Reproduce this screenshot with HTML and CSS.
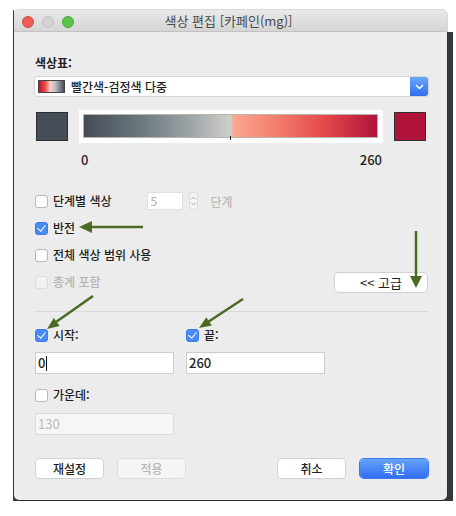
FILE: index.html
```html
<!DOCTYPE html>
<html lang="ko">
  <head>
    <meta charset="UTF-8" />
    <meta name="viewport" content="width=device-width, initial-scale=1.0" />
    <title>색상 편집</title>
    <link rel="stylesheet" href="styles.css">
  </head>
  <body>
    <div class="backdrop">
      <div class="window">
        <div class="titlebar">
          <div class="lights">
            <span class="light red"></span>
            <span class="light gray"></span>
            <span class="light green"></span>
          </div>
          <div class="title">색상 편집 [카페인(mg)]</div>
        </div>

        <div class="content">
          <div class="section-label">색상표:</div>

          <div class="dropdown">
            <span class="mini-swatch"></span>
            <span class="dropdown-text">빨간색-검정색 다중</span>
            <span class="dropdown-btn">
              <svg width="9" height="6" viewBox="0 0 9 6"><path d="M1 1 L4.5 4.5 L8 1" fill="none" stroke="#fff" stroke-width="1.5"/></svg>
            </span>
          </div>

          <div class="color-row">
            <div class="swatch swatch-start"></div>
            <div class="ramp">
              <div class="ramp-fill"></div>
              <span class="ramp-tick"></span>
            </div>
            <div class="swatch swatch-end"></div>
          </div>

          <div class="range-labels">
            <span>0</span>
            <span>260</span>
          </div>

          <div class="options">
            <div class="opt-row">
              <label class="check"><span class="box"></span>단계별 색상</label>
              <span class="spin">5</span>
              <span class="stepper">
                <svg width="8" height="14" viewBox="0 0 8 14"><path d="M1.5 5 L4 2.5 L6.5 5 M1.5 9 L4 11.5 L6.5 9" fill="none" stroke="#9a9a9a" stroke-width="1"/></svg>
              </span>
              <span class="muted">단계</span>
            </div>
            <div class="opt-row">
              <label class="check"><span class="box checked"></span>반전</label>
            </div>
            <div class="opt-row">
              <label class="check"><span class="box"></span>전체 색상 범위 사용</label>
            </div>
            <div class="opt-row between">
              <label class="check disabled"><span class="box"></span>총계 포함</label>
              <button class="btn advanced">&lt;&lt; 고급</button>
            </div>
          </div>

          <div class="separator"></div>

          <div class="range-grid">
            <label class="check"><span class="box checked"></span>시작:</label>
            <label class="check"><span class="box checked"></span>끝:</label>
            <div class="field">0<span class="caret"></span></div>
            <div class="field">260</div>
            <label class="check middle"><span class="box"></span>가운데:</label>
            <div></div>
            <div class="field disabled">130</div>
          </div>

          <div class="footer">
            <div class="footer-left">
              <button class="btn">재설정</button>
              <button class="btn disabled">적용</button>
            </div>
            <div class="footer-right">
              <button class="btn">취소</button>
              <button class="btn primary">확인</button>
            </div>
          </div>
        </div>

        <!-- annotation arrows drawn over the dialog -->
        <svg class="arrows" width="433" height="490" viewBox="0 0 433 490">
          <g stroke="#4b6a22" stroke-width="2.5" fill="#4b6a22">
            <line x1="129" y1="217" x2="76" y2="217"/>
            <polygon points="65,217 78,211 78,223" stroke="none"/>
            <line x1="402" y1="221" x2="402" y2="268"/>
            <polygon points="402,278 396,266 408,266" stroke="none"/>
            <line x1="79" y1="286" x2="42" y2="312"/>
            <polygon points="33,319 45.7,316.1 39.8,307.9" stroke="none"/>
            <line x1="229" y1="289" x2="194" y2="312"/>
            <polygon points="185,318 197.8,315.6 192.3,307.2" stroke="none"/>
          </g>
        </svg>
      </div>
    </div>
  </body>
</html>
```

FILE: styles.css
```css
* {
  margin: 0;
  padding: 0;
  box-sizing: border-box;
}
body {
  background-color: #ffffff;
  font-family: "Noto Sans CJK KR", "Noto Sans", sans-serif;
  font-size: 12px;
  font-weight: 500;
  color: #1e1e1e;
  padding: 10px 0 0 13px;
}
.backdrop {
  width: 440px;
  height: 491px;
  background: linear-gradient(to bottom, #ffffff 0, #ffffff 22px, #33373e 22px);
  border-left: 1px solid #3c4047;
}
.window {
  position: relative;
  width: 433px;
  height: 490px;
  background-color: #ececec;
  border-radius: 5px;
  overflow: hidden;
  box-shadow: 0 0 0 1px rgba(0, 0, 0, 0.15);
}
.titlebar {
  position: relative;
  height: 22px;
  background: linear-gradient(to bottom, #e9e9e9, #d5d5d5);
  border-bottom: 1px solid #c2c2c2;
  display: flex;
  align-items: center;
  justify-content: center;
}
.lights {
  position: absolute;
  left: 8px;
  top: 6px;
  display: flex;
  gap: 8px;
}
.light {
  width: 12px;
  height: 12px;
  border-radius: 50%;
}
.light.red {
  background-color: #ee5e57;
  border: 1px solid #d9473f;
}
.light.gray {
  background-color: #d3d3d3;
  border: 1px solid #c4c4c4;
}
.light.green {
  background-color: #5dc24a;
  border: 1px solid #48a83a;
}
.title {
  font-size: 13px;
  font-weight: 400;
  color: #4a4a4a;
  margin-left: -4px;
}
.content {
  padding: 23px 19px 19px 21px;
}
.section-label {
  line-height: 16px;
  font-weight: 700;
}
.dropdown {
  margin-top: 6px;
  height: 19px;
  background-color: #ffffff;
  border-radius: 3px;
  box-shadow: 0 0 0 1px #d6d6d6;
  display: flex;
  align-items: center;
  padding-left: 3px;
}
.mini-swatch {
  width: 27px;
  height: 13px;
  border: 1px solid #444;
  background: linear-gradient(to right, #c3102f, #f04a4a 25%, #fbd2c8 45%, #b9bec2 65%, #4a5058);
}
.dropdown-text {
  margin-left: 6px;
  flex: 1;
  font-size: 12px;
}
.dropdown-btn {
  width: 18px;
  height: 19px;
  border-radius: 0 3px 3px 0;
  background: linear-gradient(to bottom, #6ba7fb, #2f6ff0);
  display: flex;
  align-items: center;
  justify-content: center;
}
.color-row {
  margin-top: 14px;
  height: 33px;
  display: flex;
  align-items: center;
  justify-content: space-between;
}
.swatch {
  width: 32px;
  height: 29px;
  border: 1px solid #2d2f33;
}
.swatch-start {
  background-color: #474d57;
  margin-left: 1px;
}
.swatch-end {
  background-color: #b0133a;
  margin-right: 2px;
}
.ramp {
  position: relative;
  width: 304px;
  height: 33px;
  background-color: #ffffff;
  padding: 4px 5px 5px 4px;
  margin-left: -1px;
}
.ramp-fill {
  height: 100%;
  border: 1px solid #b9b3a8;
  background: linear-gradient(to right, #454b55 0%, #6c7a80 20%, #a3a9aa 38%, #cfcfcb 50%, #fba792 51%, #f3806e 65%, #e44a4a 82%, #b0123a 100%);
}
.ramp-tick {
  position: absolute;
  left: 151px;
  top: 26px;
  width: 1px;
  height: 4px;
  background-color: #222;
}
.range-labels {
  margin-top: 9px;
  line-height: 16px;
  display: flex;
  justify-content: space-between;
  padding: 0 46px 0 46px;
  font-size: 13px;
}
.options {
  margin-top: 24px;
  display: flex;
  flex-direction: column;
  gap: 9px;
}
.opt-row {
  height: 18px;
  display: flex;
  align-items: center;
}
.opt-row.between {
  justify-content: space-between;
}
.check {
  display: flex;
  align-items: center;
  gap: 5px;
  line-height: 16px;
}
.box {
  width: 13px;
  height: 13px;
  border-radius: 3px;
  background-color: #ffffff;
  border: 1px solid #b8b8b8;
  position: relative;
}
.box.checked {
  background-color: #4a8af5;
  border-color: #3d7be6;
}
.box.checked::after {
  content: "";
  position: absolute;
  left: 3px;
  top: 0px;
  width: 4px;
  height: 7px;
  border: solid #ffffff;
  border-width: 0 1.5px 1.5px 0;
  transform: rotate(40deg);
}
.check.disabled {
  color: #b5b5b5;
}
.check.disabled .box {
  background-color: #f2f2f2;
  border-color: #dcdcdc;
}
.spin {
  margin-left: 35px;
  width: 36px;
  height: 18px;
  background-color: #ffffff;
  border: 1px solid #e0e0e0;
  color: #b0b0b0;
  padding-left: 3px;
  line-height: 16px;
  font-size: 12px;
  font-weight: 400;
}
.stepper {
  margin-left: 6px;
  width: 9px;
  height: 18px;
  border-radius: 4px;
  background-color: #f6f6f6;
  border: 1px solid #dadada;
  display: flex;
  align-items: center;
  justify-content: center;
}
.muted {
  margin-left: 13px;
  color: #b0b0b0;
  font-weight: 400;
}
.btn {
  font-family: "Noto Sans CJK KR", "Noto Sans", sans-serif;
  font-size: 12px;
  font-weight: 500;
  height: 19px;
  width: 67px;
  border: none;
  border-radius: 4px;
  background-color: #ffffff;
  color: #1e1e1e;
  box-shadow: 0 0 0 1px #d2d2d2, 0 1px 1px rgba(0, 0, 0, 0.08);
}
.btn.advanced {
  width: 92px;
  margin-right: 1px;
  font-size: 13px;
  font-weight: 400;
}
.btn.disabled {
  background-color: #f5f5f5;
  color: #b6b6b6;
  box-shadow: 0 0 0 1px #dedede;
}
.btn.primary {
  width: 68px;
  background: linear-gradient(to bottom, #66a3fb, #2f6ef0);
  color: #ffffff;
  box-shadow: 0 0 0 1px #3b78ee;
}
.separator {
  margin-top: 20px;
  height: 1px;
  background-color: #dadada;
}
.range-grid {
  margin-top: 14px;
  display: grid;
  grid-template-columns: 139px 139px;
  column-gap: 12px;
  align-items: center;
}
.range-grid .check {
  height: 18px;
}
.field {
  margin-top: 8px;
  height: 22px;
  background-color: #ffffff;
  border: 1px solid #cdcdcd;
  font-size: 13px;
  line-height: 20px;
  padding-left: 2px;
  display: flex;
  align-items: center;
}
.caret {
  width: 1px;
  height: 15px;
  background-color: #111;
  margin-left: 1px;
}
.range-grid .middle {
  margin-top: 12px;
}
.field.disabled {
  margin-top: 9px;
  background-color: #f6f6f6;
  border-color: #dcdcdc;
  color: #b8b8b8;
  font-weight: 400;
}
.footer {
  margin-top: 24px;
  display: flex;
  justify-content: space-between;
}
.footer-left,
.footer-right {
  display: flex;
  gap: 15px;
}
.footer-left {
  margin-left: 1px;
}
.arrows {
  position: absolute;
  left: 0;
  top: 0;
  pointer-events: none;
}
```
